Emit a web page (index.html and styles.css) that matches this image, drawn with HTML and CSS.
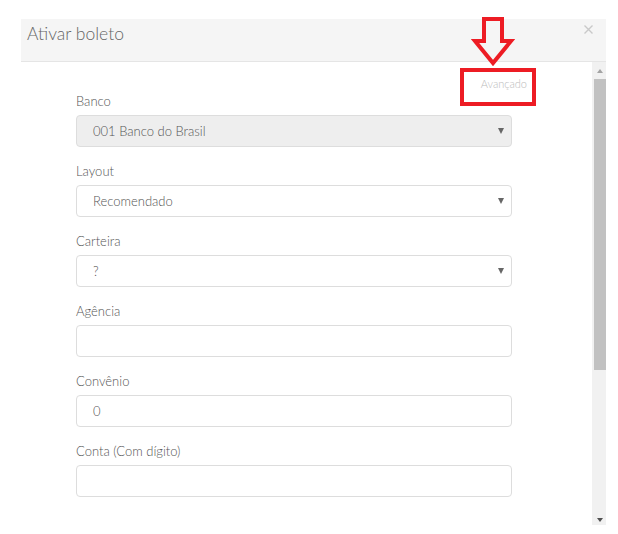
FILE: index.html
```html
<!DOCTYPE html>
<html lang="pt-BR">
<head>
<meta charset="utf-8">
<title>Ativar boleto</title>
<link rel="stylesheet" href="styles.css">
</head>
<body>
<div class="modal">
  <div class="modal-header">
    <h4 class="title">Ativar boleto</h4>
    <button class="close" type="button" aria-label="Fechar">
      <svg width="9" height="9" viewBox="0 0 9 9"><path d="M0.5 0.5 L8.5 8.5 M8.5 0.5 L0.5 8.5" stroke="#c9c9c9" stroke-width="1.4" fill="none"/></svg>
    </button>
  </div>
  <div class="modal-body">
    <div class="content">
      <div class="adv-row"><a class="adv">Avançado</a></div>
      <div class="group">
        <label class="lbl">Banco</label>
        <div class="field select disabled"><span>001 Banco do Brasil</span><i class="caret"></i></div>
      </div>
      <div class="group">
        <label class="lbl">Layout</label>
        <div class="field select"><span>Recomendado</span><i class="caret"></i></div>
      </div>
      <div class="group">
        <label class="lbl">Carteira</label>
        <div class="field select"><span>?</span><i class="caret"></i></div>
      </div>
      <div class="group">
        <label class="lbl">Agência</label>
        <div class="field"><span></span></div>
      </div>
      <div class="group">
        <label class="lbl">Convênio</label>
        <div class="field"><span>0</span></div>
      </div>
      <div class="group">
        <label class="lbl">Conta (Com dígito)</label>
        <div class="field"><span></span></div>
      </div>
    </div>
    <div class="scrollbar">
      <div class="sb-btn up"><i class="tri-up"></i></div>
      <div class="thumb"></div>
      <div class="track"></div>
      <div class="sb-btn down"><i class="tri-down"></i></div>
    </div>
  </div>
</div>
<div class="annot-box"></div>
<svg class="annot-arrow" width="50" height="56" viewBox="0 0 50 56">
  <polygon points="14,6 32,6 32,28 41,28 23,50 5,28 14,28" fill="none" stroke="#ed1c24" stroke-width="4" stroke-linejoin="miter"/>
</svg>
</body>
</html>
```
FILE: styles.css
```css
* { box-sizing: border-box; }
html, body { margin: 0; padding: 0; background: #fff; }
body {
  font-family: "Lato", "Open Sans", sans-serif;
  font-weight: 300;
  color: #555;
  position: relative;
  width: 618px;
  height: 534px;
  overflow: hidden;
}
.modal {
  margin: 19px 0 0 21px;
  width: 585px;
  background: #fff;
}
.modal-header {
  height: 43px;
  background: #f5f5f5;
  border-bottom: 1px solid #e5e5e5;
  display: flex;
  justify-content: space-between;
  align-items: flex-start;
  padding: 0 13px 0 6px;
}
.title {
  margin: 4px 0 0 0;
  font-size: 17.5px;
  line-height: 22px;
  font-weight: 300;
  color: #666;
}
.close {
  margin-top: 6px;
  padding: 0;
  border: 0;
  background: none;
  width: 9px;
  height: 9px;
  display: block;
}
.close svg { display: block; }
.modal-body {
  display: flex;
  height: 463px;
}
.content {
  flex: 1;
  padding: 0 80px 0 55px;
}
.adv-row {
  height: 31px;
  display: flex;
  justify-content: flex-end;
  align-items: flex-end;
}
.adv {
  font-size: 11px;
  line-height: 14px;
  color: #bbb;
  margin-right: -15px;
  padding-bottom: 2px;
}
.group { margin-bottom: 16px; }
.lbl {
  display: block;
  font-size: 13px;
  line-height: 16px;
  margin-bottom: 6px;
  color: #555;
}
.field {
  height: 32px;
  border: 1px solid #ddd;
  border-radius: 4px;
  display: flex;
  align-items: center;
  justify-content: space-between;
  padding: 0 7px 0 16px;
  font-size: 13px;
  color: #555;
}
.field.disabled { background: #eee; }
.caret {
  width: 0;
  height: 0;
  border-left: 3px solid transparent;
  border-right: 3px solid transparent;
  border-top: 6px solid #666;
}
.scrollbar {
  width: 14px;
  background: #f1f1f1;
  display: flex;
  flex-direction: column;
}
.sb-btn {
  display: flex;
  justify-content: center;
  padding-left: 2px;
}
.sb-btn.up { height: 17px; align-items: center; }
.sb-btn.down { height: 15px; align-items: flex-start; padding-top: 8px; }
.tri-up {
  width: 0; height: 0;
  border-left: 3.5px solid transparent;
  border-right: 3.5px solid transparent;
  border-bottom: 4px solid #a3a3a3;
}
.tri-down {
  width: 0; height: 0;
  border-left: 3.5px solid transparent;
  border-right: 3.5px solid transparent;
  border-top: 4px solid #505050;
}
.thumb {
  height: 291px;
  margin-left: 2px;
  background: #c1c1c1;
}
.track { flex: 1; }
.annot-box {
  position: absolute;
  left: 460px;
  top: 68px;
  width: 76px;
  height: 38px;
  border: 4px solid #ed1c24;
}
.annot-arrow {
  position: absolute;
  left: 470px;
  top: 13px;
}
```
